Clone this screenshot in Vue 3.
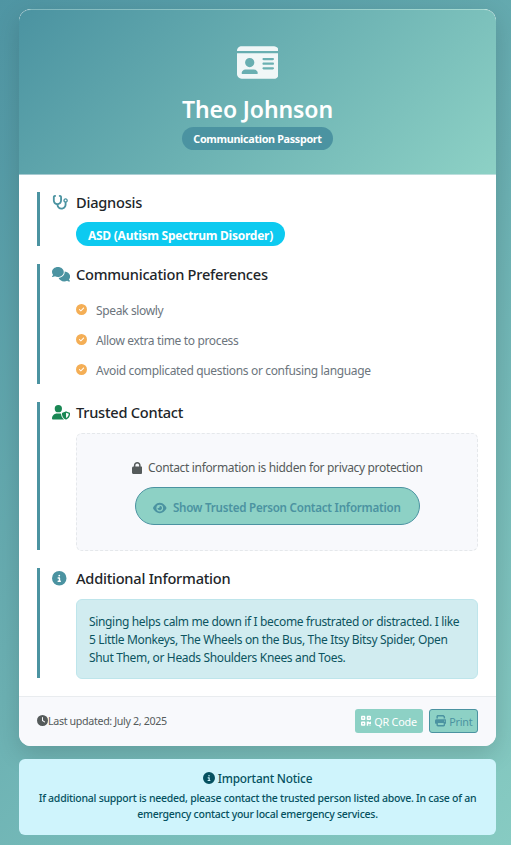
<script setup>
import { h } from 'vue'

const icons = {
  idCard: [576, 'M0 96l576 0c0-35.3-28.7-64-64-64L64 32C28.7 32 0 60.7 0 96zm0 32L0 416c0 35.3 28.7 64 64 64l448 0c35.3 0 64-28.7 64-64l0-288L0 128zM64 405.3c0-29.5 23.9-53.3 53.3-53.3l117.3 0c29.5 0 53.3 23.9 53.3 53.3c0 5.9-4.8 10.7-10.7 10.7L74.7 416c-5.9 0-10.7-4.8-10.7-10.7zM176 192a64 64 0 1 1 0 128 64 64 0 1 1 0-128zm176 16c0-8.8 7.2-16 16-16l128 0c8.8 0 16 7.2 16 16s-7.2 16-16 16l-128 0c-8.8 0-16-7.2-16-16zm0 64c0-8.8 7.2-16 16-16l128 0c8.8 0 16 7.2 16 16s-7.2 16-16 16l-128 0c-8.8 0-16-7.2-16-16zm0 64c0-8.8 7.2-16 16-16l128 0c8.8 0 16 7.2 16 16s-7.2 16-16 16l-128 0c-8.8 0-16-7.2-16-16z'],
  stethoscope: [576, 'M142.4 21.9c5.6 16.8-3.5 34.9-20.2 40.5L96 71.1 96 192c0 53 43 96 96 96s96-43 96-96l0-120.9-26.1-8.7c-16.8-5.6-25.8-23.7-20.2-40.5s23.7-25.8 40.5-20.2l26.1 8.7C334.4 19.1 352 43.5 352 71.1L352 192c0 77.2-54.6 141.6-127.3 156.7C231 404.6 278.4 448 336 448c61.9 0 112-50.1 112-112l0-70.7c-28.3-12.3-48-40.5-48-73.3c0-44.2 35.8-80 80-80s80 35.8 80 80c0 32.8-19.7 61-48 73.3l0 70.7c0 97.2-78.8 176-176 176c-92.9 0-168.9-71.9-175.5-163.1C87.2 334.2 32 269.6 32 192L32 71.1c0-27.5 17.6-52 43.8-60.7l26.1-8.7c16.8-5.6 34.9 3.5 40.5 20.2zM480 224a32 32 0 1 0 0-64 32 32 0 1 0 0 64z'],
  comments: [640, 'M208 352c114.9 0 208-78.8 208-176S322.9 0 208 0S0 78.8 0 176c0 38.6 14.7 74.3 39.6 103.4c-3.5 9.4-8.7 17.7-14.2 24.7c-4.8 6.2-9.7 11-13.3 14.3c-1.8 1.6-3.3 2.9-4.3 3.7c-.5 .4-.9 .7-1.1 .8l-.2 .2C1 327.2-1.4 334.4 .8 340.9S9.1 352 16 352c21.8 0 43.8-5.6 62.1-12.5c9.2-3.5 17.8-7.4 25.2-11.4C134.1 343.3 169.8 352 208 352zM448 176c0 112.3-99.1 196.9-216.5 207C255.8 457.4 336.4 512 432 512c38.2 0 73.9-8.7 104.7-23.9c7.5 4 16 7.9 25.2 11.4c18.3 6.9 40.3 12.5 62.1 12.5c6.9 0 13.1-4.5 15.2-11.1c2.1-6.6-.2-13.8-5.8-17.9l-.2-.2c-.2-.2-.6-.4-1.1-.8c-1-.8-2.5-2-4.3-3.7c-3.6-3.3-8.5-8.1-13.3-14.3c-5.5-7-10.7-15.4-14.2-24.7c24.9-29 39.6-64.7 39.6-103.4c0-92.8-84.9-168.9-192.6-175.5c.4 5.1 .6 10.3 .6 15.5z'],
  userShield: [640, 'M224 256A128 128 0 1 0 224 0a128 128 0 1 0 0 256zm-45.7 48C79.8 304 0 383.8 0 482.3C0 498.7 13.3 512 29.7 512l388.6 0c1.8 0 3.5-.2 5.3-.5c-76.3-55.1-99.8-141-103.1-200.2c-16.1-4.8-33.1-7.3-50.7-7.3l-91.4 0zm308.8-78.3l-120 48C358 277.4 352 286.2 352 296c0 63.3 25.9 168.8 134.8 214.2c5.9 2.5 12.6 2.5 18.5 0C614.1 464.8 640 359.3 640 296c0-9.8-6-18.6-15.1-22.3l-120-48c-5.7-2.3-12.1-2.3-17.8 0zM591.4 312c-3.9 50.7-27.2 116.7-95.4 149.7l0-187.8L591.4 312z'],
  info: [512, 'M256 512A256 256 0 1 0 256 0a256 256 0 1 0 0 512zM216 336l24 0 0-64-24 0c-13.3 0-24-10.7-24-24s10.7-24 24-24l48 0c13.3 0 24 10.7 24 24l0 88 8 0c13.3 0 24 10.7 24 24s-10.7 24-24 24l-80 0c-13.3 0-24-10.7-24-24s10.7-24 24-24zm40-208a32 32 0 1 1 0 64 32 32 0 1 1 0-64z'],
  check: [512, 'M256 512A256 256 0 1 0 256 0a256 256 0 1 0 0 512zM369 209L241 337c-9.4 9.4-24.6 9.4-33.9 0l-64-64c-9.4-9.4-9.4-24.6 0-33.9s24.6-9.4 33.9 0l47 47L335 175c9.4-9.4 24.6-9.4 33.9 0s9.4 24.6 0 33.9z'],
  lock: [448, 'M144 144l0 48 160 0 0-48c0-44.2-35.8-80-80-80s-80 35.8-80 80zM80 192l0-48C80 64.5 144.5 0 224 0s144 64.5 144 144l0 48 16 0c35.3 0 64 28.7 64 64l0 192c0 35.3-28.7 64-64 64L64 512c-35.3 0-64-28.7-64-64L0 256c0-35.3 28.7-64 64-64l16 0z'],
  eye: [576, 'M288 32c-80.8 0-145.5 36.8-192.6 80.6C48.6 156 17.3 208 2.5 243.7c-3.3 7.9-3.3 16.7 0 24.6C17.3 304 48.6 356 95.4 399.4C142.5 443.2 207.2 480 288 480s145.5-36.8 192.6-80.6c46.8-43.5 78.1-95.4 93-131.1c3.3-7.9 3.3-16.7 0-24.6c-14.9-35.7-46.2-87.7-93-131.1C433.5 68.8 368.8 32 288 32zM144 256a144 144 0 1 1 288 0 144 144 0 1 1 -288 0zm144-64c0 35.3-28.7 64-64 64c-7.1 0-13.9-1.2-20.3-3.3c-5.5-1.8-11.9 1.6-11.7 7.4c.3 6.9 1.3 13.8 3.2 20.7c13.7 51.2 66.4 81.6 117.6 67.9s81.6-66.4 67.9-117.6c-11.1-41.5-47.8-69.4-88.6-71.1c-5.8-.2-9.2 6.1-7.4 11.7c2.1 6.4 3.3 13.2 3.3 20.3z'],
  clock: [512, 'M256 0a256 256 0 1 1 0 512A256 256 0 1 1 256 0zM232 120l0 136c0 8 4 15.5 10.7 20l96 64c11 7.4 25.9 4.4 33.3-6.7s4.4-25.9-6.7-33.3L280 243.2 280 120c0-13.3-10.7-24-24-24s-24 10.7-24 24z'],
  qrcode: [448, 'M0 80C0 53.5 21.5 32 48 32l96 0c26.5 0 48 21.5 48 48l0 96c0 26.5-21.5 48-48 48l-96 0c-26.5 0-48-21.5-48-48L0 80zM64 96l0 64 64 0 0-64L64 96zM0 336c0-26.5 21.5-48 48-48l96 0c26.5 0 48 21.5 48 48l0 96c0 26.5-21.5 48-48 48l-96 0c-26.5 0-48-21.5-48-48l0-96zm64 16l0 64 64 0 0-64-64 0zM304 32l96 0c26.5 0 48 21.5 48 48l0 96c0 26.5-21.5 48-48 48l-96 0c-26.5 0-48-21.5-48-48l0-96c0-26.5 21.5-48 48-48zm80 64l-64 0 0 64 64 0 0-64zM256 304c0-8.8 7.2-16 16-16l64 0c8.8 0 16 7.2 16 16s7.2 16 16 16l32 0c8.8 0 16-7.2 16-16s7.2-16 16-16s16 7.2 16 16l0 96c0 8.8-7.2 16-16 16l-64 0c-8.8 0-16-7.2-16-16s-7.2-16-16-16s-16 7.2-16 16l0 64c0 8.8-7.2 16-16 16l-32 0c-8.8 0-16-7.2-16-16l0-160zM368 480a16 16 0 1 1 0-32 16 16 0 1 1 0 32zm64 0a16 16 0 1 1 0-32 16 16 0 1 1 0 32z'],
  print: [512, 'M128 0C92.7 0 64 28.7 64 64l0 96 64 0 0-96 226.7 0L384 93.3l0 66.7 64 0 0-66.7c0-17-6.7-33.3-18.7-45.3L400 18.7C388 6.7 371.7 0 354.7 0L128 0zM384 352l0 32 0 64-256 0 0-64 0-16 0-16 256 0zm64 32l32 0c17.7 0 32-14.3 32-32l0-96c0-35.3-28.7-64-64-64L64 192c-35.3 0-64 28.7-64 64l0 96c0 17.7 14.3 32 32 32l32 0 0 64c0 35.3 28.7 64 64 64l256 0c35.3 0 64-28.7 64-64l0-64zM432 248a24 24 0 1 1 0 48 24 24 0 1 1 0-48z'],
}

// Icon height follows the font size; its width follows the glyph's own box.
const Icon = (props) => {
  const [width, d] = icons[props.name]
  return h('svg', { viewBox: `0 0 ${width} 512`, style: { height: '1em', width: `${width / 512}em` }, fill: 'currentColor', 'aria-hidden': 'true' }, [h('path', { d })])
}
Icon.props = ['name']

const preferences = [
  'Speak slowly',
  'Allow extra time to process',
  'Avoid complicated questions or confusing language',
]
</script>

<template>
  <main class="page">
    <article class="card">
      <header class="hero">
        <Icon name="idCard" class="hero-icon" />
        <h1>Theo Johnson</h1>
        <span class="badge kind">Communication Passport</span>
      </header>

      <div class="body">
        <section class="diagnosis">
          <Icon name="stethoscope" class="lead" />
          <div class="content">
            <h2>Diagnosis</h2>
            <span class="badge condition">ASD (Autism Spectrum Disorder)</span>
          </div>
        </section>

        <section class="prefs">
          <Icon name="comments" class="lead" />
          <div class="content">
            <h2>Communication Preferences</h2>
            <ul>
              <li v-for="item in preferences" :key="item"><Icon name="check" class="tick" /><span>{{ item }}</span></li>
            </ul>
          </div>
        </section>

        <section class="contact">
          <Icon name="userShield" class="lead green" />
          <div class="content">
            <h2>Trusted Contact</h2>
            <div class="hidden-box">
              <p><Icon name="lock" /><span>Contact information is hidden for privacy protection</span></p>
              <button class="reveal"><Icon name="eye" /><span>Show Trusted Person Contact Information</span></button>
            </div>
          </div>
        </section>

        <section class="extra">
          <Icon name="info" class="lead" />
          <div class="content">
            <h2>Additional Information</h2>
            <p class="note">Singing helps calm me down if I become frustrated or distracted. I like<br>5 Little Monkeys, The Wheels on the Bus, The Itsy Bitsy Spider, Open<br>Shut Them, or Heads Shoulders Knees and Toes.</p>
          </div>
        </section>
      </div>

      <footer>
        <span class="updated"><Icon name="clock" /><span>Last updated: July 2, 2025</span></span>
        <span class="actions">
          <button class="small qr"><Icon name="qrcode" /><span>QR Code</span></button>
          <button class="small print"><Icon name="print" /><span>Print</span></button>
        </span>
      </footer>
    </article>

    <aside class="notice">
      <h3><Icon name="info" /><span>Important Notice</span></h3>
      <p>If additional support is needed, please contact the trusted person listed above. In case of an<br>emergency contact your local emergency services.</p>
    </aside>
  </main>
</template>

<style>
body { margin: 0; }
</style>

<style scoped>
* { box-sizing: border-box; }
h1, h2, h3, p, ul { margin: 0; padding: 0; }
svg { flex: none; display: block; }
button { font-family: inherit; margin: 0; }
.page {
  height: 845px;
  padding: 9px 15px 10px 19px;
  overflow: hidden;
  display: flex;
  flex-direction: column;
  gap: 13px;
  background: linear-gradient(135deg, #4f95a3 0%, #87cbc2 100%);
  font-family: "Noto Sans", "Open Sans", sans-serif;
  font-size: 12px;
  letter-spacing: -.34px;
  white-space: nowrap;
  color: #212529;
}
.card {
  height: 737px;
  flex: none;
  display: flex;
  flex-direction: column;
  border-radius: 12px;
  overflow: hidden;
  background: #fff;
  box-shadow: 0 8px 24px rgba(0, 0, 0, .15);
}
.hero {
  height: 166px;
  flex: none;
  display: flex;
  flex-direction: column;
  align-items: center;
  padding-top: 29px;
  background: linear-gradient(135deg, #4b93a1 0%, #8dd1c5 100%);
  border-top: 1px solid rgba(255, 255, 255, .22);
  border-bottom: 1px solid rgba(255, 255, 255, .5);
  border-radius: 12px 12px 0 0;
  color: #fff;
}
.hero-icon { font-size: 37px; opacity: .9; margin-top: 5px; }
h1 { font-size: 23px; font-weight: 600; line-height: 28px; margin-top: 14px; letter-spacing: -.1px; }
.badge { display: flex; align-items: center; justify-content: center; border-radius: 12px; color: #fff; font-weight: 700; }
.kind { width: 151px; height: 23px; margin-top: 4px; background: #4b93a1; font-size: 10.8px; letter-spacing: -.33px; }
.body { flex: 1; padding: 17px 18px 18px; display: flex; flex-direction: column; gap: 18px; }
section { border-left: 3px solid #4b93a1; padding-left: 12px; display: flex; }
.diagnosis { height: 54px; }
.prefs { height: 120px; }
.contact { height: 148px; }
.extra { height: 110px; }
.lead { font-size: 14.5px; color: #4b93a1; margin: 3px 0 0; }
.lead.green { color: #198754; }
.content { width: 402px; margin-left: auto; }
h2 { font-size: 14.6px; font-weight: 500; line-height: 20px; letter-spacing: -.24px; }
.condition { width: 209px; height: 24px; margin-top: 10px; background: #0dcaf0; font-size: 12px; letter-spacing: -.25px; padding-top: 2px; }
ul { list-style: none; margin-top: 11px; }
li { height: 30px; display: flex; align-items: center; gap: 9px; color: #6c757d; letter-spacing: -.35px; }
.tick { font-size: 11px; color: #f4ae55; margin-top: -1px; }
.hidden-box { height: 118px; margin-top: 10.5px; border: 1px dashed #e5e8eb; border-radius: 6px; background: #f8f9fc; display: flex; flex-direction: column; align-items: center; }
.hidden-box p { height: 18px; margin-top: 25px; display: flex; align-items: center; gap: 6px; color: #555b5b; }
.hidden-box p svg { font-size: 12px; }
.reveal { width: 285px; height: 38px; margin-top: 10.5px; border: 1px solid #4b93a1; border-radius: 19px; background: #8dd1c5; color: #4b93a1; font-size: 11.6px; font-weight: 600; letter-spacing: -.24px; display: flex; align-items: center; justify-content: center; gap: 6px; padding: 3px 0 0; }
.reveal svg { font-size: 12px; }
.note { height: 80px; margin-top: 10.5px; padding: 13px 12px; border: 1px solid #bee5eb; border-radius: 6px; background: #d1ecf0; color: #0c5460; line-height: 18px; }
footer { height: 50px; flex: none; border-top: 1px solid #e9ecef; background: #f8f9fc; padding: 0 18px 1px; display: flex; align-items: center; justify-content: space-between; color: #555b5b; font-size: 10.7px; }
.updated { display: flex; align-items: center; letter-spacing: -.35px; padding-bottom: 1px; }
.updated svg { font-size: 11px; }
.actions { display: flex; gap: 6px; }
.small { height: 24px; border-radius: 3px; display: flex; align-items: center; justify-content: center; gap: 3px; padding: 0; font-size: 10.8px; letter-spacing: -.22px; background: #8dd1c5; }
.small svg { font-size: 11.5px; }
.qr { width: 68px; border: 0; color: #fff; }
.print { width: 49px; border: 1px solid #4b93a1; color: #4b93a1; }
.notice { height: 76px; flex: none; border-radius: 6px; background: #cff4fc; color: #055160; text-align: center; padding-top: 10px; }
h3 { font-size: 11.8px; font-weight: 500; line-height: 18px; display: flex; align-items: center; justify-content: center; gap: 3px; letter-spacing: -.2px; }
h3 svg { font-size: 12px; }
.notice p { font-size: 10.5px; font-weight: 500; line-height: 16px; margin-top: 3px; letter-spacing: -.25px; }
</style>
